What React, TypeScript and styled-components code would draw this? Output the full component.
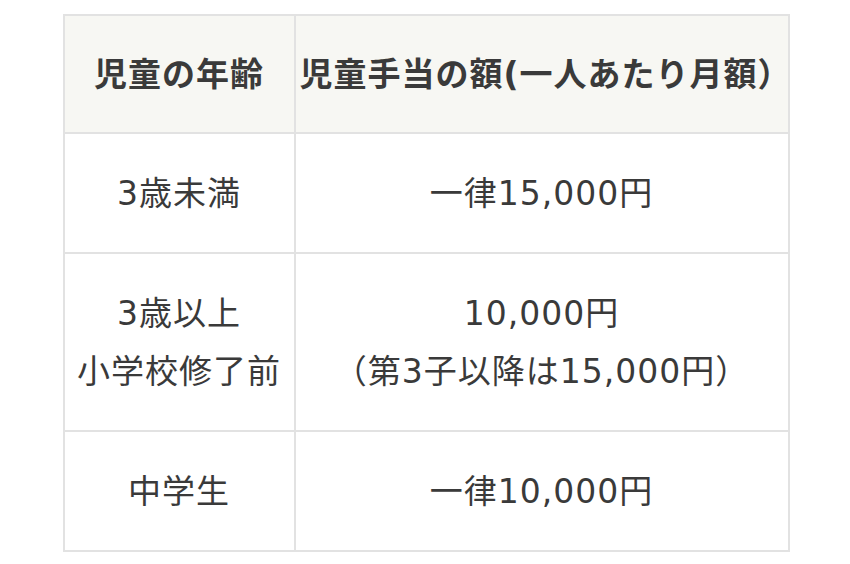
import { FC } from 'react';
import styled, { createGlobalStyle } from 'styled-components';

const GlobalStyle = createGlobalStyle`
  html, body {
    margin: 0;
    padding: 0;
    background: #ffffff;
  }
  body {
    font-family: "DejaVu Sans", "Noto Sans CJK JP", sans-serif;
    color: #3a3a3a;
  }
`;

const Page = styled.div`
  display: flex;
  justify-content: center;
  padding-top: 14px;
  padding-left: 2px;
`;

const Table = styled.table`
  width: 727px;
  border-collapse: collapse;
  table-layout: fixed;
  font-size: 33px;
  line-height: 58px;
  letter-spacing: 1px;
`;

const HeadCell = styled.th<{ $width?: number }>`
  width: ${(p) => (p.$width ? `${p.$width}px` : 'auto')};
  border: 2px solid #e2e2e2;
  background: #f7f7f3;
  font-weight: 600;
  padding: 30px 4px 28px;
  text-align: center;
  white-space: nowrap;
`;

const Cell = styled.td`
  border: 2px solid #e2e2e2;
  padding: 31px 4px 29px;
  text-align: center;
  font-weight: 400;
  white-space: nowrap;
`;

const rows: { age: string[]; amount: string[] }[] = [
  { age: ['3歳未満'], amount: ['一律15,000円'] },
  { age: ['3歳以上', '小学校修了前'], amount: ['10,000円', '（第3子以降は15,000円）'] },
  { age: ['中学生'], amount: ['一律10,000円'] },
];

const Lines: FC<{ lines: string[] }> = ({ lines }) => (
  <>
    {lines.map((l, i) => (
      <span key={i}>
        {i > 0 && <br />}
        {l}
      </span>
    ))}
  </>
);

const App: FC = () => {
  return (
    <>
      <GlobalStyle />
      <Page>
        <Table>
          <thead>
            <tr>
              <HeadCell $width={221}>児童の年齢</HeadCell>
              <HeadCell>児童手当の額(一人あたり月額）</HeadCell>
            </tr>
          </thead>
          <tbody>
            {rows.map((r, i) => (
              <tr key={i}>
                <Cell>
                  <Lines lines={r.age} />
                </Cell>
                <Cell>
                  <Lines lines={r.amount} />
                </Cell>
              </tr>
            ))}
          </tbody>
        </Table>
      </Page>
    </>
  );
};

export default App;
